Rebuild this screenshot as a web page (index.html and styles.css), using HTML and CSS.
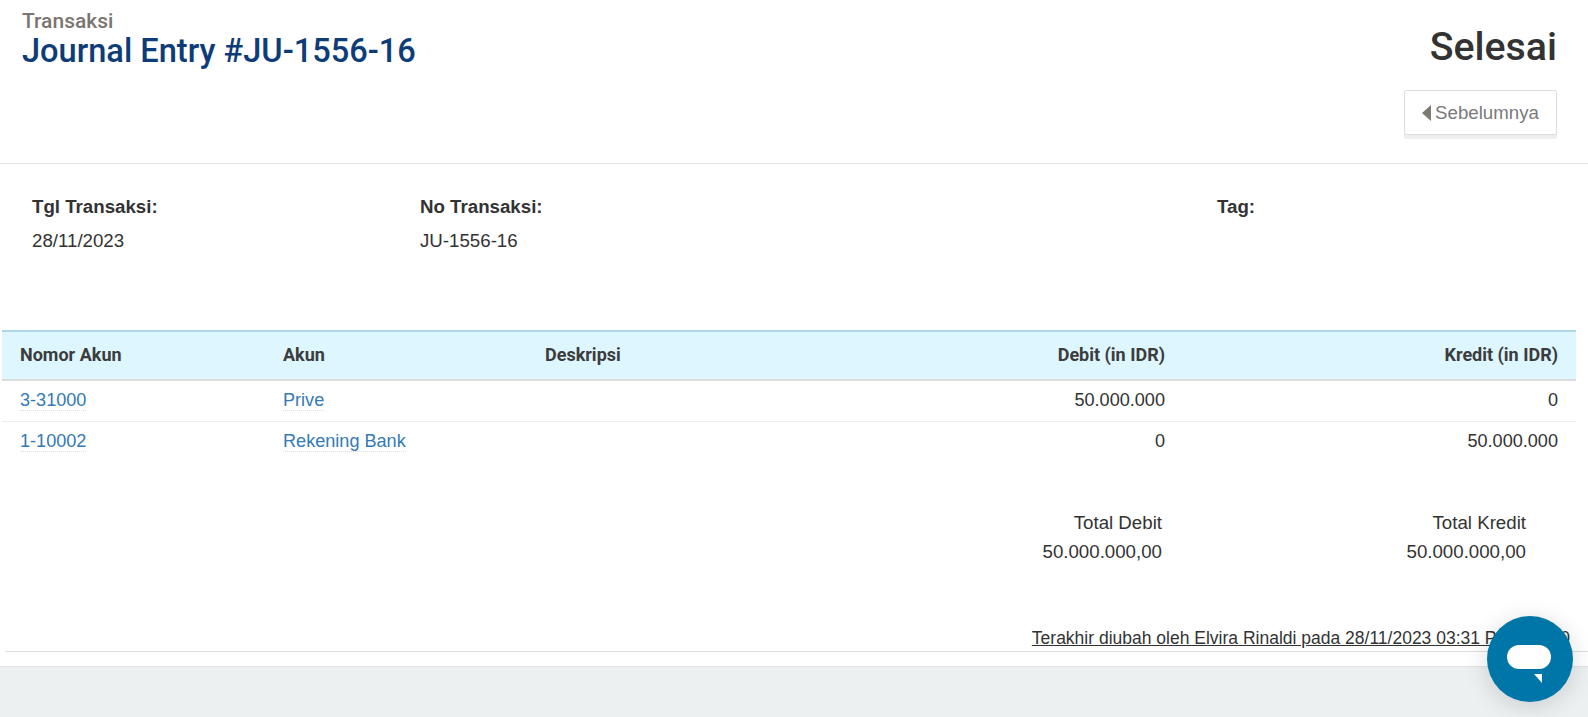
FILE: index.html
```html
<!DOCTYPE html>
<html lang="id">
<head>
<meta charset="utf-8">
<title>Journal Entry #JU-1556-16</title>
<link rel="stylesheet" href="styles.css">
</head>
<body>
<main class="page">
  <header class="head">
    <div class="head-left">
      <div class="crumb">Transaksi</div>
      <h1 class="title">Journal Entry #JU-1556-16</h1>
    </div>
    <div class="head-right">
      <div class="status">Selesai</div>
      <a class="prev"><svg class="prev-icon" viewBox="0 0 9 16" width="9" height="16"><path d="M9 0V16L0 8Z"/></svg>Sebelumnya</a>
    </div>
  </header>
  <section class="meta">
    <div class="meta-col col-date"><div class="meta-label">Tgl Transaksi:</div><div class="meta-value">28/11/2023</div></div>
    <div class="meta-col col-no"><div class="meta-label">No Transaksi:</div><div class="meta-value">JU-1556-16</div></div>
    <div class="meta-col col-tag"><div class="meta-label">Tag:</div></div>
  </section>
  <table class="entries">
    <thead>
      <tr><th class="c1">Nomor Akun</th><th class="c2">Akun</th><th class="c3">Deskripsi</th><th class="c4 num">Debit (in IDR)</th><th class="c5 num">Kredit (in IDR)</th></tr>
    </thead>
    <tbody>
      <tr><td><a class="link">3-31000</a></td><td><a class="link">Prive</a></td><td></td><td class="num">50.000.000</td><td class="num">0</td></tr>
      <tr><td><a class="link">1-10002</a></td><td><a class="link">Rekening Bank</a></td><td></td><td class="num">0</td><td class="num">50.000.000</td></tr>
    </tbody>
  </table>
  <section class="totals">
    <div class="total total-debit"><div>Total Debit</div><div>50.000.000,00</div></div>
    <div class="total total-kredit"><div>Total Kredit</div><div>50.000.000,00</div></div>
  </section>
  <div class="modified"><span class="modified-text">Terakhir diubah oleh Elvira Rinaldi pada 28/11/2023 03:31 PM +07:00</span></div>
</main>
<footer class="foot"></footer>
<button class="chat" aria-label="Chat">
  <svg viewBox="0 0 44 38" width="44" height="38"><rect x="0" y="0" width="44" height="24" rx="12" fill="#fff"/><path d="M27 29H35V38Z" fill="#fff"/></svg>
</button>
</body>
</html>
```
FILE: styles.css
```css
* { box-sizing: border-box; }
html, body { margin: 0; padding: 0; height: 100%; }
body {
  font-family: "Liberation Sans", Arial, sans-serif;
  font-size: 18.7px;
  color: #333;
  background: #ecf0f1;
  overflow: hidden;
}
.page {
  background: #fff;
  height: 667px;
  border-bottom: 1px solid #e0e3e4;
  padding-left: 2px;
  width: 100%;
}
.head {
  display: flex;
  justify-content: space-between;
  height: 164px;
  margin-left: -2px;
  padding: 10px 31px 0 22px;
  border-bottom: 1px solid #e6e6e6;
}
.crumb {
  font-family: Roboto, sans-serif;
  font-weight: 500;
  font-size: 21px;
  line-height: 23px;
  color: #7a7570;
}
.title {
  margin: 0;
  font-family: Roboto, sans-serif;
  font-weight: 500;
  font-size: 32.6px;
  line-height: 36px;
  color: #0d3c78;
}
.head-right {
  display: flex;
  flex-direction: column;
  align-items: flex-end;
}
.status {
  font-family: Roboto, sans-serif;
  font-weight: 500;
  font-size: 39.3px;
  line-height: 46px;
  margin-top: 14px;
  color: #333;
}
.prev {
  margin-top: 20px;
  width: 153px;
  height: 45px;
  display: flex;
  align-items: center;
  justify-content: center;
  gap: 4px;
  background: #fff;
  border: 1px solid #ddd;
  border-radius: 2px;
  box-shadow: 0 4px 0 #eee;
  color: #7a7a7a;
}
.prev-icon { fill: #7a7a70; }
.meta {
  display: flex;
  padding-top: 31px;
  height: 166px;
}
.col-date { width: 388px; padding-left: 30px; }
.col-no { width: 797px; padding-left: 30px; }
.col-tag { padding-left: 30px; }
.meta-label { font-weight: 700; line-height: 24px; }
.meta-value { margin-top: 10px; line-height: 24px; }
.entries {
  width: 1574px;
  border-collapse: collapse;
  table-layout: fixed;
}
.entries th {
  height: 49px;
  background: #def6ff;
  border-top: 2px solid #add6e8;
  border-bottom: 2px solid #dcdcdc;
  padding: 0 18px 2px;
  text-align: left;
  font-family: Roboto, sans-serif;
  font-size: 18px;
  font-weight: 700;
  color: #3c3c3c;
}
.entries td {
  height: 41px;
  padding: 0 18px;
  border-bottom: 1px solid #eee;
  font-size: 18.1px;
}
.entries tr:last-child td { border-bottom: 0; }
.entries .num { text-align: right; }
.c1, .c2, .c3 { width: 262px; }
.c1 { width: 263px; }
.c4 { width: 394px; }
.c5 { width: 393px; }
.link {
  color: #337ab7;
  border-bottom: 1px dotted #ddd;
}
.totals {
  display: flex;
  margin-top: 47px;
  height: 111px;
}
.total { text-align: right; line-height: 28.5px; }
.total-debit { width: 1160px; }
.total-kredit { width: 364px; }
.modified {
  height: 32px;
  margin-left: 3px;
  border-bottom: 1px solid #ddd;
  text-align: right;
  padding-right: 18px;
  padding-top: 4px;
  font-size: 17.5px;
  line-height: 28px;
  white-space: nowrap;
}
.modified-text { text-decoration: underline; }
.foot { height: 50px; }
.chat {
  position: fixed;
  left: 1487px;
  top: 616px;
  width: 86px;
  height: 86px;
  border: 0;
  border-radius: 50%;
  background: #0075a8;
  box-shadow: 0 4px 24px rgba(0,0,0,.15);
  display: flex;
  align-items: center;
  justify-content: center;
  padding: 9px 2px 0 0;
}
```
